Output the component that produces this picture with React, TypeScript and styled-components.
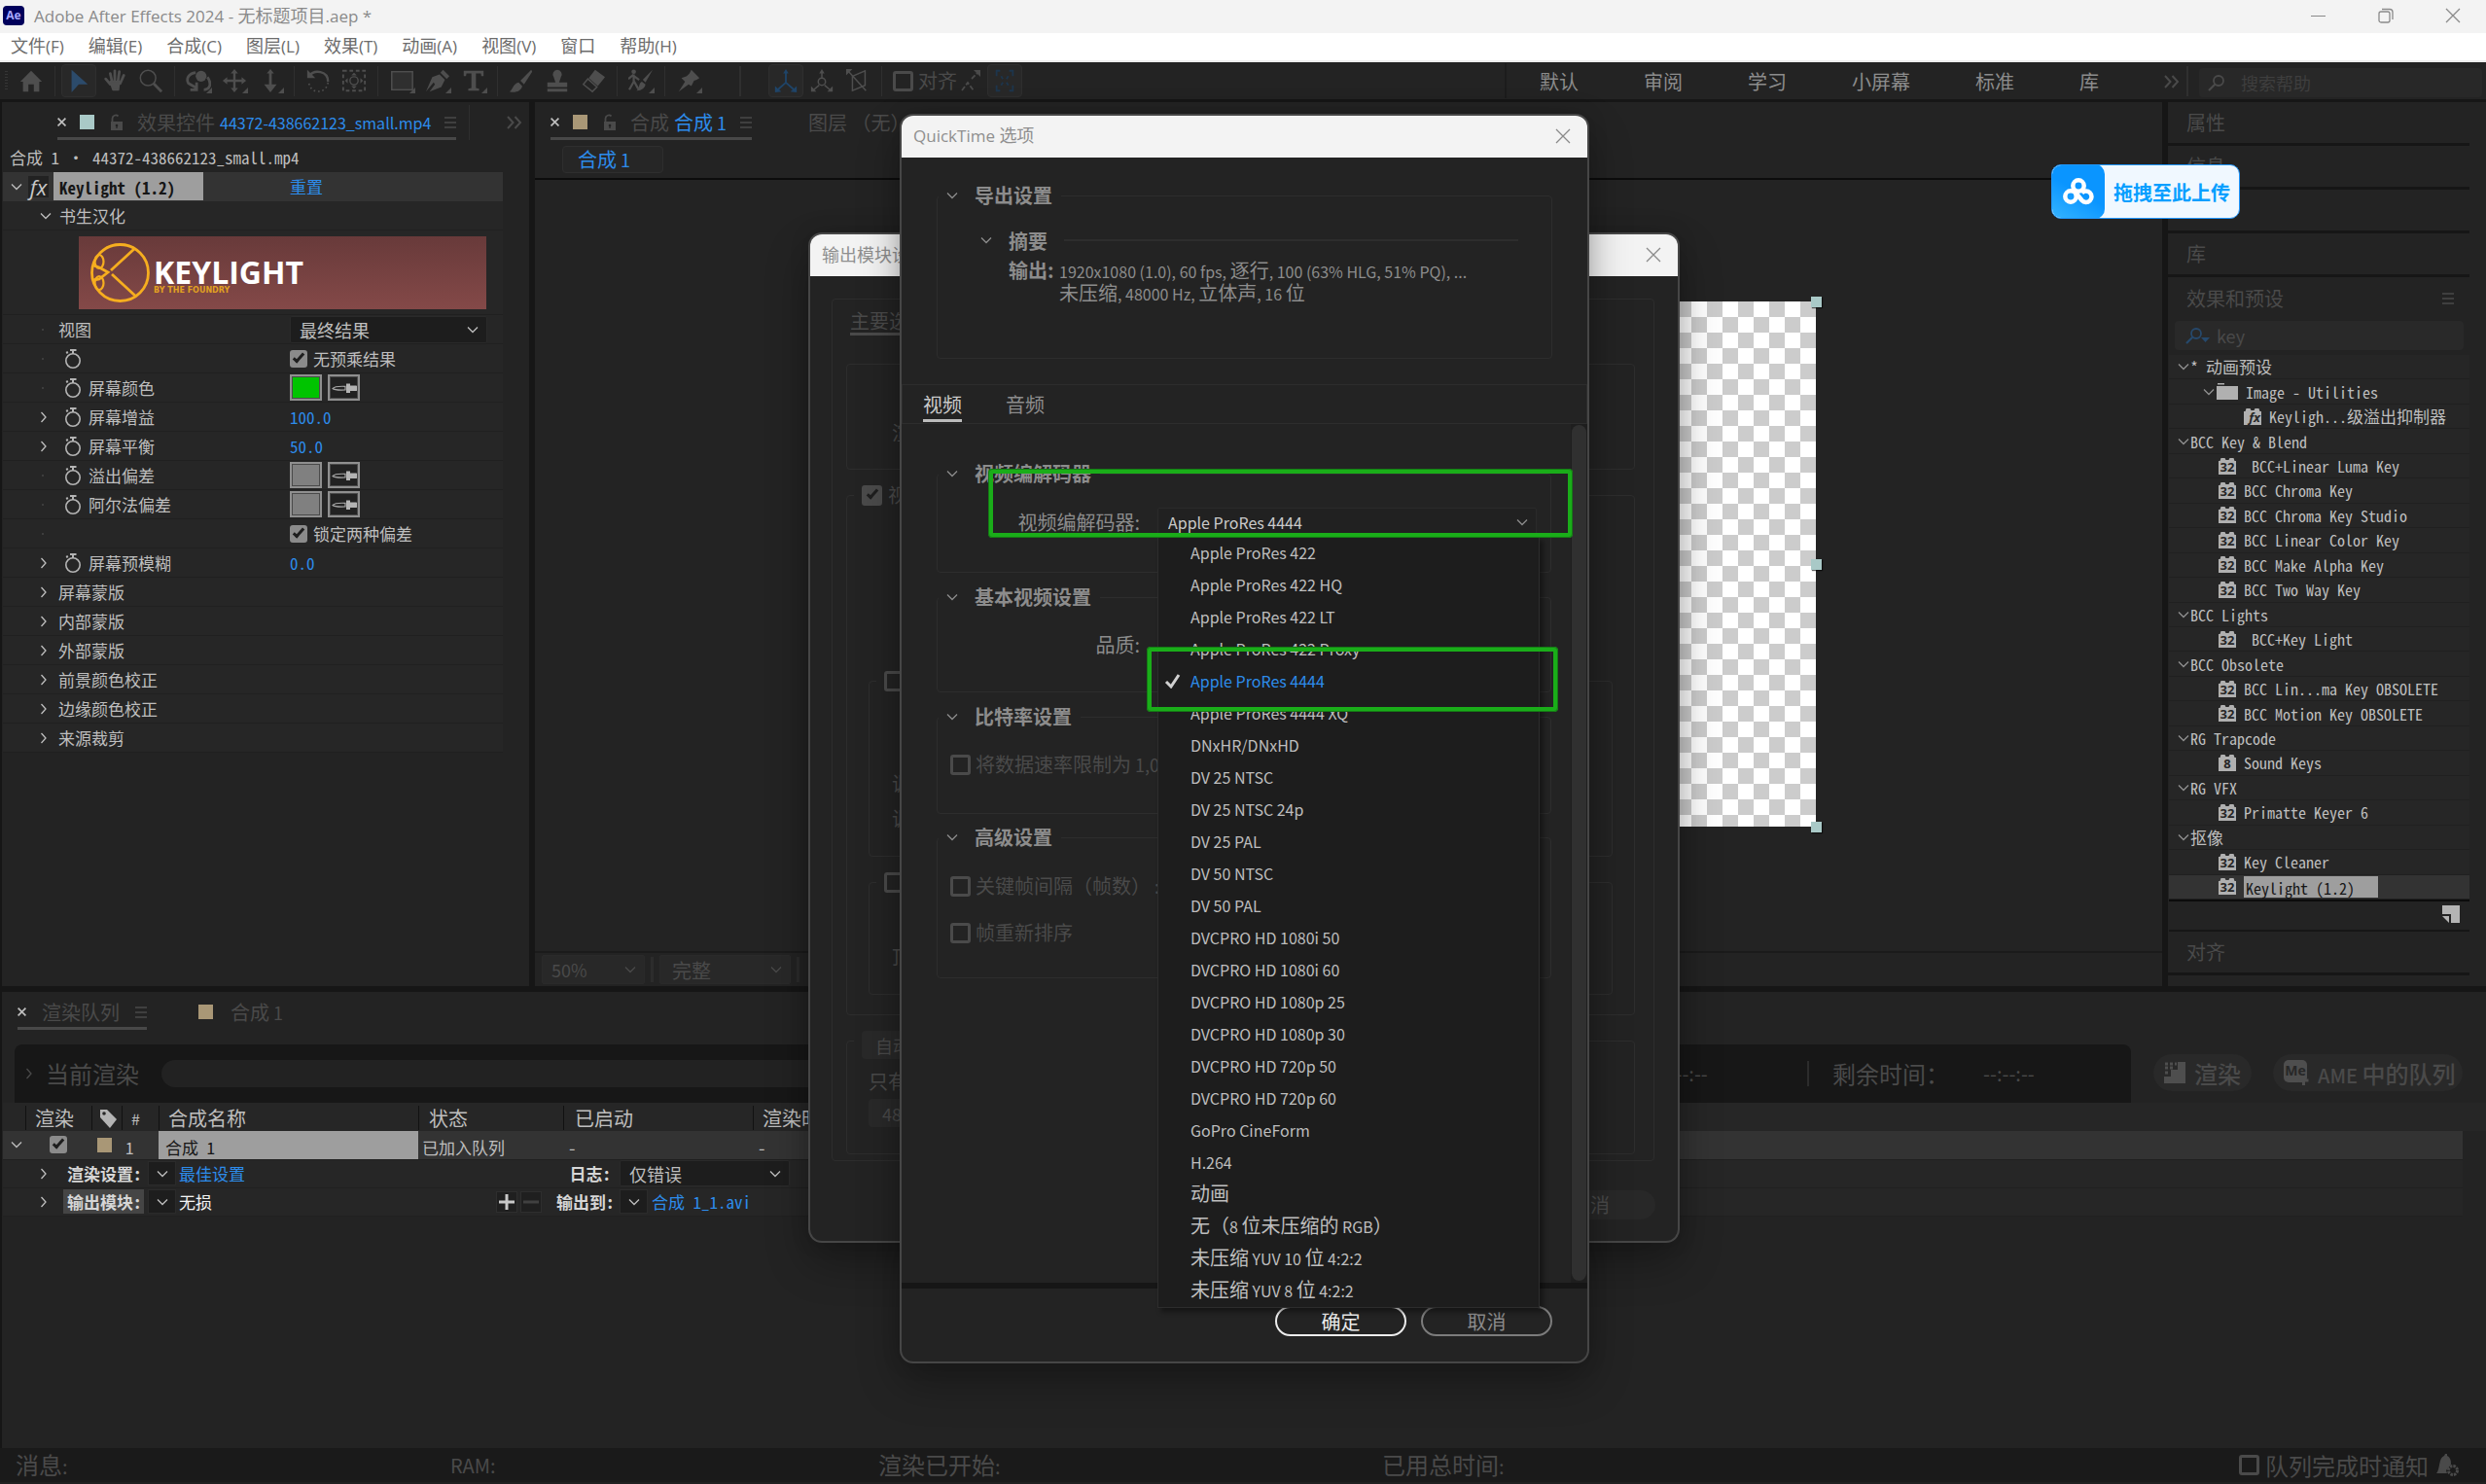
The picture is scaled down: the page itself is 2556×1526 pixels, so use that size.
import React from "react";
import styled, { createGlobalStyle, css } from "styled-components";

const uiFont = '"Noto Sans CJK SC", "Noto Sans", sans-serif';
const winFont = '"Open Sans", "Noto Sans CJK SC", sans-serif';
const listFont = '"Noto Sans Mono CJK SC", "Liberation Mono", "Noto Sans CJK SC", monospace';

const c = {
  gap: "#161616",
  panel: "#232323",
  row: "#262626",
  rowLine: "#202020",
  selected: "#333333",
  field: "#1d1d1d",
  line: "#2d2d2d",
  dim: "#4a4a4a",
  mid: "#8c8c8c",
  text: "#bebebe",
  bright: "#d6d6d6",
  blue: "#2d8ceb",
  highlight: "#9e9e9e",
  aqua: "#a9c9c7",
  sand: "#a99776",
};

const Global = createGlobalStyle`
  *, *::before, *::after { box-sizing: border-box; }
  html, body { margin: 0; background: ${c.panel}; }
  body { font-family: ${uiFont}; font-size: 16px; color: ${c.text}; }
  button, input, select { font: inherit; color: inherit; margin: 0; }
  button { background: none; border: 0; padding: 0; text-align: left; cursor: pointer; }
  ul { list-style: none; margin: 0; padding: 0; }
  h1, h2, h3, p { margin: 0; font-size: inherit; font-weight: inherit; }
  svg { display: block; flex: none; }
`;

/* Chinese runs are set a little larger than the Latin text beside them. */
const Run = styled.span<{ $size: number }>`
  font-size: ${(p) => p.$size}px;
`;
function Mixed({ children, cjk = 20 }: { children: string; cjk?: number }) {
  const parts = children.split(/([\u3000-\u9fff\uff00-\uffef]+)/).filter(Boolean);
  return (
    <span>
      {parts.map((part, i) =>
        /[\u3000-\u9fff\uff00-\uffef]/.test(part) ? (
          <Run key={i} $size={cjk}>{part}</Run>
        ) : (
          part
        )
      )}
    </span>
  );
}

/* ---------- small drawings ---------- */
const Chevron = ({ dir = "down", color = c.text }: { dir?: "down" | "right"; color?: string }) =>
  dir === "down" ? (
    <svg width="12" height="8" viewBox="0 0 12 8" fill="none" stroke={color} strokeWidth="1.3">
      <path d="M1 1.5 6 6.5 11 1.5" />
    </svg>
  ) : (
    <svg width="8" height="12" viewBox="0 0 8 12" fill="none" stroke={color} strokeWidth="1.3">
      <path d="M1.5 1 6 6 1.5 11" />
    </svg>
  );
const Cross = ({ size = 16, color = "#8a8a8a", w = 1.3 }: { size?: number; color?: string; w?: number }) => (
  <svg width={size} height={size} viewBox="0 0 16 16" stroke={color} strokeWidth={w}>
    <path d="M1 1 15 15M15 1 1 15" />
  </svg>
);
const Bars = () => (
  <svg width="12" height="12" viewBox="0 0 12 12" stroke={c.dim} strokeWidth="1.4">
    <path d="M0 1H12M0 6H12M0 11H12" />
  </svg>
);
const Guillemet = ({ color = c.dim }: { color?: string }) => (
  <svg width="16" height="14" viewBox="0 0 16 14" fill="none" stroke={color} strokeWidth="2">
    <path d="M1 1 6.500 7 1 13M8.500 1 14 7 8.500 13" />
  </svg>
);
const Lock = () => (
  <svg width="16" height="18" viewBox="0 0 16 18">
    <rect x="3" y="8" width="12" height="9" fill={c.dim} />
    <path d="M4.500 8V5a3.500 3.500 0 0 1 6-2.500" fill="none" stroke={c.dim} strokeWidth="1.8" />
    <circle cx="9" cy="12" r="1.300" fill={c.panel} />
    <path d="M9 12v3" stroke={c.panel} strokeWidth="1.2" />
  </svg>
);
const Stopwatch = () => (
  <svg width="18" height="22" viewBox="0 0 18 22" fill="none" stroke="#b4b4b4" strokeWidth="1.6">
    <circle cx="9" cy="13" r="7.200" />
    <path d="M9 2.500V6M6 2H12.500M2.500 3.500 3.500 5.500" strokeWidth="2" />
  </svg>
);
const Dropper = () => (
  <svg width="28" height="12" viewBox="0 0 28 12">
    <path d="M2 6.500C4 4 8 4 15 4.300V8C8 8.300 4 8.500 2 6.500Z" fill="none" stroke="#a8a8a8" strokeWidth="1.2" />
    <path d="M16 1.500h4v2h6a2 2 0 0 1 2 2v2a2 2 0 0 1-2 1.500h-6v2h-4Z" fill="#b4b4b4" />
  </svg>
);
const Search = ({ color = c.dim, menu = false }: { color?: string; menu?: boolean }) => (
  <svg width={menu ? 26 : 20} height="18" viewBox={menu ? "0 0 26 18" : "0 0 20 18"} fill="none" stroke={color} strokeWidth="1.8">
    <circle cx="11" cy="7" r="5" />
    <path d="M7.300 10.700 1 17" strokeWidth="2.2" />
    {menu && <path d="M16 11h9l-4.500 5Z" fill={color} stroke="none" />}
  </svg>
);
const Brick = ({ label }: { label: string }) => (
  <svg width="18" height="17" viewBox="0 0 18 17">
    <path d="M0 3h1.500L2.500 0h4l1 2h3l1-2h4l1 3H18V17H0Z" fill="#b0b0b0" />
    <text
      x={label === "fx" ? 11 : 9}
      y="14"
      textAnchor="middle"
      fontFamily="Open Sans, sans-serif"
      fontSize="13"
      fontWeight="700"
      fontStyle={label === "fx" ? "italic" : "normal"}
      fill="#262626"
    >
      {label}
    </text>
  </svg>
);
const Folder = () => (
  <svg width="22" height="17" viewBox="0 0 22 17">
    <path d="M1 0h7v1.500H1ZM0 3h22v14H0Z" fill="#b0b0b0" />
  </svg>
);

const g = "#4e4e4e";
const toolIcons: Record<string, React.ReactNode> = {
  home: <path d="M2 15 14 3 26 15H23V26H17V18H11V26H5V15Z" fill={g} />,
  select: <path d="M6 2V27L14 18H24Z" fill="#2c4b6b" />,
  hand: (
    <g fill="none" stroke={g} strokeWidth="3" strokeLinecap="round">
      <path d="M4 12 9 18M9 6 11 15M14 3V14M19 4 17.500 15M24 8 20 17" />
      <path d="M9 15h10l-1 9h-6Z" fill={g} strokeWidth="2" strokeLinejoin="round" />
    </g>
  ),
  zoom: (
    <g fill="none" stroke={g}>
      <circle cx="11" cy="11" r="8.500" strokeWidth="1.6" />
      <path d="M17 17 26 26" strokeWidth="3" />
    </g>
  ),
  orbit: (
    <g>
      <circle cx="17" cy="9" r="6" fill={g} />
      <path d="M11 5C3 6 0 12 3 17L12 22M24 10C29 17 27 24 20 24M12 16V24H5" fill="none" stroke={g} strokeWidth="3" />
    </g>
  ),
  pan: (
    <g fill={g}>
      <path d="M14 1 18 6H10ZM14 27 18 22H10ZM1 14 6 10V18ZM27 14 22 10V18Z" />
      <path d="M14 4V24M4 14H24" stroke={g} strokeWidth="2.600" />
    </g>
  ),
  dolly: (
    <g fill={g}>
      <path d="M14 1 18 6H10ZM14 27 21 18H7Z" />
      <path d="M14 4V20" stroke={g} strokeWidth="3" />
    </g>
  ),
  rotate: (
    <g fill="none" stroke={g} strokeWidth="2.600">
      <path d="M4 9C10 1 25 3 25 15" />
      <path d="M25 16C23 29 6 29 4 17" strokeDasharray="1.800 3" strokeWidth="1.8" />
      <path d="M2 2V11H11Z" fill={g} stroke="none" />
    </g>
  ),
  anchor: (
    <g>
      <rect x="2" y="3" width="24" height="22" fill="none" stroke={g} strokeWidth="2" strokeDasharray="4 3" />
      <circle cx="14" cy="14" r="4.500" fill="none" stroke={g} strokeWidth="1.5" />
      <path d="M14 5 17 8H11ZM14 23 17 20H11ZM4 14 7 11V17ZM24 14 21 11V17Z" fill={g} />
    </g>
  ),
  rect: <rect x="3" y="4" width="23" height="20" fill="#2f2f2f" stroke={g} strokeWidth="1.6" />,
  pen: (
    <g fill={g}>
      <path d="M1 26 8 10 16 7 22 13 18 21 5 26 11 18 9.500 16Z" />
      <path d="M17 5 20 2 27 9 24 12Z" />
    </g>
  ),
  type: <path d="M3 3H25V9H22.500L22 6H16.500V22L20 23V25H8V23L11.500 22V6H6L5.500 9H3Z" fill={g} />,
  brush: (
    <g fill={g}>
      <path d="M25 2 13 14 17 18 26 4Z" />
      <path d="M11 16 15 20C14 26 6 28 1 26 5 24 4 18 11 16Z" />
    </g>
  ),
  stamp: <path d="M14 2a5 5 0 0 1 4 8L16 16H25V21H3V16H12L10 10A5 5 0 0 1 14 2ZM3 23H25V26H3Z" fill={g} />,
  eraser: (
    <g>
      <path d="M16 2 27 10 19 20 9 11Z" fill={g} />
      <path d="M8 12 18 21 13 26 3 18Z" fill="none" stroke={g} strokeWidth="1.6" />
    </g>
  ),
  roto: (
    <g fill={g}>
      <circle cx="6" cy="4" r="2.500" />
      <path d="M6 7V15L1 24M6 14 11 23M0 12 5 8 12 13" fill="none" stroke={g} strokeWidth="2.400" />
      <path d="M27 2 16 13 19 16Z" />
      <path d="M15 15 19 18C18 24 12 25 9 25 13 22 11 17 15 15Z" />
    </g>
  ),
  pin: <path d="M17 2 26 11 23 13 20 14 17 20 14 18 3 26 10 15 6 11 12 9 15 6Z" fill={g} />,
  axis: (
    <g fill="none" stroke="#1f4468" strokeWidth="2">
      <path d="M14 5V16L5 24M14 16 23 24" />
      <path d="M14 1 17 6H11ZM2 27V20L9 26ZM26 27V20L19 26Z" fill="#1f4468" stroke="none" />
    </g>
  ),
  axisWorld: (
    <g fill="none" stroke={g} strokeWidth="1.6">
      <path d="M14 5V11M11 19 5 24M17 19 23 24" />
      <circle cx="14" cy="15" r="4" />
      <path d="M14 1 17 6H11ZM2 26V20L8 26ZM26 26V20L20 26Z" fill={g} stroke="none" />
    </g>
  ),
  axisView: (
    <g fill="none" stroke={g} strokeWidth="1.6">
      <path d="M3 3 23 25M8 9 22 3V19L8 25Z" />
      <path d="M1 1H8L1 8Z" fill={g} stroke="none" />
    </g>
  ),
  frame: (
    <g fill="none" stroke="#1d354c" strokeWidth="2">
      <path d="M5 9V3H9M19 3H23V9M23 19V25H19M9 25H5V19" />
      <path d="M10 9l2 3M18 9l-2 3M10 19l2-3M18 19l-2-3" />
    </g>
  ),
};

/* ---------- shell ---------- */
const Shell = styled.div`
  position: relative;
  display: flex;
  flex-direction: column;
  min-height: 100vh;
  overflow: hidden;
  background: ${c.gap};
`;
const TitleBar = styled.header`
  display: flex;
  align-items: center;
  height: 34px;
  background: #f3f3f3;
  color: #8a8a8a;
  font-family: ${winFont};
  font-size: 17px;
  line-height: 24px;
  padding: 0 0 2px 3px;
`;
const AppBadge = styled.span`
  display: grid;
  place-items: center;
  width: 22px;
  height: 20px;
  margin-right: 10px;
  border-radius: 4px;
  background: #00005b;
  color: #a9a9ff;
  font-size: 12px;
  font-weight: 700;
  line-height: 18px;
`;
const WindowButtons = styled.div`
  display: flex;
  margin-left: auto;
`;
const WindowButton = styled.button`
  display: grid;
  place-items: center;
  width: 69px;
  height: 32px;
`;
const MenuBar = styled.nav`
  display: flex;
  align-items: center;
  gap: 25px;
  height: 30px;
  padding: 0 0 2px 11px;
  background: #fff;
  border-bottom: 2px solid #ececec;
  color: #6c6c6c;
  font-family: ${winFont};
  font-size: 17px;
  line-height: 24px;
`;
const Toolbar = styled.div`
  display: flex;
  align-items: center;
  height: 41px;
  background: ${c.panel};
  border-bottom: 3px solid ${c.gap};
`;
const Grip = styled.span`
  width: 3px;
  height: 20px;
  margin: 0 6px 0 5px;
  background: repeating-linear-gradient(#363636 0 1px, transparent 1px 3px);
`;
const Tool = styled.button<{ $on?: boolean }>`
  position: relative;
  display: grid;
  place-items: center;
  width: 36px;
  height: 34px;
  margin-right: 1px;
  border-radius: 4px;
  border: 1px solid ${(p) => (p.$on ? "#2f2f2f" : "transparent")};
  background: ${(p) => (p.$on ? "#282828" : "transparent")};
`;
const ToolCorner = styled.i`
  position: absolute;
  right: 3px;
  bottom: 3px;
  border: 3px solid transparent;
  border-right-color: ${g};
  border-bottom-color: ${g};
`;
const ToolRule = styled.span<{ $w?: number }>`
  width: ${(p) => p.$w ?? 1}px;
  height: 31px;
  margin: 0 6px 0 5px;
  background: #2f2f2f;
`;
const Spring = styled.span<{ $w?: number }>`
  flex: ${(p) => (p.$w ? `0 0 ${p.$w}px` : "1 1 0")};
`;
const CheckTool = styled.label`
  display: flex;
  align-items: center;
  gap: 5px;
  margin: 0 3px 0 5px;
  color: ${c.dim};
  font-size: 20px;
  line-height: 30px;
`;
const Workspaces = styled.div`
  display: flex;
  align-items: center;
  gap: 67px;
  height: 36px;
  padding: 2px 2px 0 34px;
  border-left: 2px solid #1c1c1c;
  color: ${c.mid};
  font-size: 20px;
  line-height: 30px;
`;
const HelpSearch = styled.label`
  display: flex;
  align-items: center;
  gap: 14px;
  width: 291px;
  height: 30px;
  margin: 4px 4px 0 5px;
  padding-left: 9px;
  border-radius: 4px;
  background: #282828;
`;
const PlainInput = styled.input`
  flex: 1;
  min-width: 0;
  border: 0;
  outline: 0;
  padding: 0;
  background: transparent;
  color: ${c.dim};
  font-size: 18px;
  line-height: 26px;
  &::placeholder { color: #3e3e3e; opacity: 1; }
`;

const Upper = styled.main`
  display: grid;
  grid-template-columns: 542px minmax(0, 1fr) 327px;
  gap: 6px;
  padding-left: 2px;
`;
const Panel = styled.section`
  display: flex;
  flex-direction: column;
  min-width: 0;
  background: ${c.panel};
`;
const TabStrip = styled.div<{ $pad: number }>`
  display: flex;
  align-items: flex-start;
  height: 39px;
  padding-left: ${(p) => p.$pad}px;
  color: ${c.dim};
`;
const Tab = styled.div<{ $active?: boolean; $gap?: number }>`
  display: flex;
  align-items: center;
  gap: ${(p) => p.$gap ?? 14}px;
  height: 39px;
  padding-top: 5px;
  border-bottom: 3px solid ${(p) => (p.$active ? "#484848" : "transparent")};
  font-size: 18px;
  line-height: 28px;
  white-space: nowrap;
`;
const TabName = styled.span`
  display: flex;
  gap: 5px;
`;
const Blue = styled.span`
  color: ${c.blue};
`;
const FileName = styled(Blue)`
  font-size: 16px;
`;
const Swatch = styled.i<{ $color: string }>`
  width: 15px;
  height: 15px;
  background: ${(p) => p.$color};
`;
const StripEnd = styled.span`
  display: flex;
  align-items: center;
  height: 36px;
  margin: 3px 0 0 13px;
  padding-left: 38px;
  border-left: 1px solid #2e2e2e;
`;

const listText = css`
  font-family: ${listFont};
  line-height: 24px;
  white-space: pre;
`;
const SourcePath = styled.p`
  ${listText}
  height: 33px;
  padding: 6px 0 0 8px;
  font-size: 17px;
`;
const Props = styled.div`
  ${listText}
  width: 514px;
  margin-left: 1px;
  font-size: 17px;
`;
const PropRow = styled.div<{ $head?: boolean; $pad: number }>`
  display: grid;
  grid-template-columns: 295px 1fr;
  align-items: center;
  height: 30px;
  background: ${(p) => (p.$head ? c.selected : c.row)};
  border-bottom: 1px solid ${(p) => (p.$head ? c.selected : c.rowLine)};
  > :first-child { padding-left: ${(p) => p.$pad}px; }
`;
const PropName = styled.span`
  display: flex;
  align-items: center;
`;
const Arrow = styled.span<{ $w: number }>`
  display: flex;
  width: ${(p) => p.$w}px;
`;
const Dot = styled.i`
  width: 2px;
  height: 2px;
  margin: 0 2px;
  background: #3d3d3d;
`;
const WatchSlot = styled.span`
  width: 25px;
  margin-left: 6px;
`;
const FxMark = styled.span`
  display: grid;
  place-items: center;
  width: 21px;
  height: 22px;
  margin: 0 5px 0 0;
  background: #222;
  color: #c8c8c8;
  font: italic 22px/22px "Open Sans", sans-serif;
`;
const NameChip = styled.span<{ $w: number; $h: number; $pad: number; $bold?: boolean }>`
  width: ${(p) => p.$w}px;
  height: ${(p) => p.$h}px;
  padding-left: ${(p) => p.$pad}px;
  background: ${c.highlight};
  color: #161616;
  font-weight: ${(p) => (p.$bold ? 700 : 400)};
  line-height: ${(p) => p.$h + 2}px;
`;
const BannerRow = styled.div`
  height: 87px;
  padding: 6px 17px 6px 78px;
  background: ${c.row};
  border-bottom: 1px solid ${c.rowLine};
`;
const Banner = styled.div`
  display: flex;
  align-items: center;
  gap: 4px;
  height: 75px;
  padding-left: 12px;
  background: linear-gradient(#683a3a, #844948);
`;
const BannerName = styled.div`
  padding-top: 7px;
  color: #fff;
  font: 700 32px/30px "Open Sans", sans-serif;
  small {
    display: block;
    color: #e0a022;
    font: 700 8px/8px "DejaVu Sans", sans-serif;
  }
`;
const PropValue = styled.span`
  display: flex;
  align-items: center;
  gap: 6px;
`;
const ColorButton = styled.button<{ $color: string }>`
  display: grid;
  place-items: center;
  width: 33px;
  height: 27px;
  border: 2px solid #8f8f8f;
  outline: 1px solid #4a4a4a;
  outline-offset: -3px;
  background: ${(p) => p.$color};
`;
const Tick = styled.input.attrs({ type: "checkbox" })<{ $size?: number; $dim?: boolean }>`
  appearance: none;
  flex: none;
  display: grid;
  place-items: center;
  width: ${(p) => p.$size ?? 18}px;
  height: ${(p) => p.$size ?? 18}px;
  border: 3px solid ${(p) => (p.$dim ? c.dim : "#8b8b8b")};
  border-radius: 3px;
  &:checked { background: ${(p) => (p.$dim ? c.dim : "#8b8b8b")}; }
  &:checked::before {
    content: "";
    width: 6px;
    height: 12px;
    margin-top: -4px;
    border: solid #1e1e1e;
    border-width: 0 3px 3px 0;
    transform: rotate(42deg);
  }
`;
const TickLabel = styled.label`
  display: flex;
  align-items: center;
  gap: 6px;
`;
const SelectBox = styled.span<{ $w: number; $h: number; $bg?: string; $pad?: number }>`
  position: relative;
  display: flex;
  align-items: center;
  width: ${(p) => p.$w}px;
  height: ${(p) => p.$h}px;
  border-radius: 2px;
  border: 1px solid #2a2a2a;
  background: ${(p) => p.$bg ?? c.field};
  select {
    appearance: none;
    width: 100%;
    height: 100%;
    border: 0;
    outline: 0;
    padding: 0 0 0 ${(p) => p.$pad ?? 9}px;
    background: transparent;
  }
  svg { position: absolute; right: 8px; pointer-events: none; }
`;
const SelectText = styled.select<{ $size: number; $color?: string }>`
  font-family: ${uiFont};
  font-size: ${(p) => p.$size}px;
  color: ${(p) => p.$color ?? c.text};
`;

/* ---------- composition ---------- */
const Crumb = styled.div`
  height: 41px;
  padding: 6px 0 0 28px;
  border-bottom: 2px solid #0c0c0c;
`;
const CrumbButton = styled.button`
  width: 104px;
  height: 28px;
  padding-left: 15px;
  border: 1px solid #2e2e2e;
  border-radius: 4px;
  background: #262626;
  color: ${c.blue};
  font-size: 18px;
  line-height: 24px;
`;
const Stage = styled.div`
  display: flex;
  justify-content: center;
  padding: 125px 0 128px;
`;
const Canvas = styled.div`
  position: relative;
  width: 960px;
  height: 540px;
  background: conic-gradient(#ccc 25%, #fff 0 50%, #ccc 0 75%, #fff 0) 0 0 / 32px 32px;
`;
const Handle = styled.i<{ $at: string }>`
  position: absolute;
  right: -6px;
  top: ${(p) => p.$at};
  width: 11px;
  height: 11px;
  margin-top: -5px;
  background: ${c.aqua};
  box-shadow: 1px 1px 1px rgba(0, 0, 0, 0.6);
`;
const ViewBar = styled.div`
  display: flex;
  align-items: center;
  gap: 6px;
  height: 36px;
  padding-left: 7px;
  border-top: 2px solid #1b1b1b;
`;
const ViewRule = styled.i`
  width: 3px;
  height: 26px;
  background: #2c2c2c;
`;

/* ---------- right column ---------- */
const PanelTitle = styled.h2`
  display: flex;
  align-items: center;
  height: 45px;
  margin-right: 17px;
  padding-left: 19px;
  border-bottom: 3px solid ${c.gap};
  color: ${c.dim};
  font-size: 20px;
  line-height: 28px;
`;
const EffectsTitle = styled.h2`
  display: flex;
  align-items: center;
  justify-content: space-between;
  height: 45px;
  padding: 0 33px 2px 19px;
  color: ${c.dim};
  font-size: 20px;
  line-height: 28px;
`;
const EffectSearch = styled.label`
  display: flex;
  align-items: center;
  gap: 6px;
  height: 30px;
  margin: 0 23px 5px 7px;
  padding-left: 11px;
  border-radius: 4px;
  background: #292929;
`;
const EffectList = styled.ul`
  ${listText}
  display: flex;
  flex-direction: column;
  height: 562px;
  margin: 0 17px 0 1px;
  border-bottom: 2px solid #0c0c0c;
  font-size: 16px;
`;
const EffectRow = styled.li<{ $pad: number; $on?: boolean }>`
  display: flex;
  flex: 1 1 0;
  min-height: 0;
  align-items: center;
  padding-left: ${(p) => p.$pad}px;
  background: ${(p) => (p.$on ? c.selected : c.row)};
  border-bottom: 1px solid ${c.rowLine};
`;
const EffectIcon = styled.span`
  margin-right: 8px;
`;
const EffectFoot = styled.div`
  display: flex;
  justify-content: flex-end;
  height: 31px;
  margin: 0 17px 0 1px;
  padding: 4px 10px 0 0;
  border-bottom: 2px solid ${c.gap};
`;

/* ---------- render queue ---------- */
const Queue = styled.section`
  flex: 1;
  margin: 6px 0 0 2px;
  background: ${c.panel};
`;
const Current = styled.div`
  display: flex;
  align-items: flex-start;
  margin-top: 15px;
  padding-left: 13px;
`;
const CurrentBox = styled.div`
  flex: 1;
  display: flex;
  align-items: center;
  height: 60px;
  padding-left: 11px;
  border-radius: 8px 8px 0 0;
  background: #171717;
  color: ${c.dim};
  font-size: 24px;
  line-height: 32px;
`;
const CurrentName = styled.span`
  margin: 0 23px 0 13px;
`;
const Progress = styled.div`
  flex: 1;
  height: 28px;
  margin-right: 190px;
  border-radius: 14px;
  background: #222;
`;
const Clock = styled.span<{ $w: number }>`
  width: ${(p) => p.$w}px;
  font-size: 20px;
`;
const TimeLeft = styled.span`
  width: 181px;
  padding-left: 24px;
  border-left: 2px solid #2c2c2c;
  line-height: 26px;
`;
const RenderButton = styled.button<{ $w: number; $ml: number }>`
  display: flex;
  align-items: center;
  gap: 9px;
  width: ${(p) => p.$w}px;
  height: 38px;
  margin: 10px 0 0 ${(p) => p.$ml}px;
  padding-left: 11px;
  border-radius: 19px;
  background: #292929;
  color: ${c.dim};
  font-size: 20px;
  font-weight: 500;
  white-space: nowrap;
`;
const QueueTable = styled.table`
  width: calc(100% - 25px);
  margin-left: 1px;
  border-collapse: collapse;
  table-layout: fixed;
  font-family: ${listFont};
  font-size: 17px;
  th, td { padding: 0; text-align: left; font-weight: 400; white-space: nowrap; }
  th {
    height: 29px;
    background: ${c.row};
    font-family: ${uiFont};
    font-size: 20px;
    line-height: 28px;
  }
  th:last-child { box-shadow: 24px 0 0 ${c.row}; }
`;
const Head = styled.span<{ $pad: number }>`
  display: flex;
  align-items: center;
  height: 25px;
  margin-top: 2px;
  padding-left: ${(p) => p.$pad}px;
  border-left: 1px solid #111;
`;
const ItemRow = styled.tr`
  height: 29px;
  background: ${c.selected};
  border-bottom: 1px solid #1f1f1f;
`;
const ItemCell = styled.td<{ $pad: number; $name?: boolean }>`
  && {
    padding: 3px 0 0 ${(p) => p.$pad}px;
    line-height: 24px;
    vertical-align: bottom;
    ${(p) => p.$name && `background: ${c.highlight}; color: #161616;`}
  }
`;
const CellBox = styled.span<{ $pad: number }>`
  display: flex;
  align-items: center;
  height: 28px;
  padding-left: ${(p) => p.$pad}px;
`;
const DetailRow = styled.tr`
  height: 29px;
  background: ${c.row};
  border-bottom: 1px solid ${c.rowLine};
`;
const Detail = styled.div`
  display: grid;
  grid-template-columns: 38px 24px 87px 32px 312px 76px 65px auto;
  align-items: center;
  height: 28px;
`;
const DetailLabel = styled.span<{ $on?: boolean }>`
  justify-self: start;
  height: 25px;
  padding: 0 2px 0 4px;
  background: ${(p) => (p.$on ? "#454545" : "transparent")};
  color: ${c.bright};
  font-weight: 700;
  line-height: 26px;
`;
const DetailRight = styled.span`
  padding-right: 9px;
  color: ${c.bright};
  font-weight: 700;
  text-align: right;
`;
const MiniMenu = styled.button`
  display: grid;
  place-items: center;
  width: 29px;
  height: 25px;
  border: 1px solid #2b2b2b;
  background: ${c.field};
`;
const Pair = styled.span`
  display: flex;
  align-items: center;
  gap: 4px;
`;
const SquareButton = styled.button`
  display: grid;
  place-items: center;
  width: 22px;
  height: 22px;
  border: 1px solid #2e2e2e;
  background: #1f1f1f;
`;
const White = styled.span`
  color: #f4f4f4;
`;
const Plus = styled.span`
  display: flex;
  gap: 3px;
  width: 47px;
  margin-left: 14px;
`;
const StatusBar = styled.footer`
  display: grid;
  grid-template-columns: 447px 440px 518px 1fr auto auto;
  align-items: center;
  height: 37px;
  padding: 0 27px 0 16px;
  background: #1a1a1a;
  border-bottom: 2px solid #202020;
  color: ${c.dim};
  font-size: 20px;
  line-height: 30px;
`;
const NotifyCheck = styled.label`
  display: flex;
  align-items: center;
  gap: 6px;
  margin-right: 8px;
`;

/* ---------- windows ---------- */
const Dialog = styled.section<{ $w: number; $top: number; $dx: number }>`
  position: absolute;
  top: ${(p) => p.$top}px;
  left: calc(50% - ${(p) => p.$dx}px);
  width: ${(p) => p.$w}px;
  border: 2px solid #464646;
  border-radius: 14px;
  background: ${c.panel};
  box-shadow: 0 20px 44px rgba(0, 0, 0, 0.3), 0 0 20px rgba(0, 0, 0, 0.14);
`;
const DialogHead = styled.header`
  display: flex;
  align-items: center;
  justify-content: space-between;
  height: 43px;
  padding: 0 17px 2px 12px;
  border-radius: 12px 12px 0 0;
  background: #f3f3f3;
  color: #8f8f8f;
  font-family: ${winFont};
  font-size: 17px;
  line-height: 24px;
`;
const Frame = styled.div`
  margin: 23px 24px 0 22px;
  padding: 10px 19px 6px 14px;
  border: 1px solid ${c.line};
  border-radius: 4px;
`;
const FrameTab = styled.button`
  display: block;
  height: 27px;
  margin: 0 0 29px 4px;
  border-bottom: 3px solid ${c.dim};
  color: ${c.dim};
  font-size: 20px;
  line-height: 22px;
`;
const Group = styled.fieldset<{ $h: number; $mt?: number }>`
  min-width: 0;
  min-height: ${(p) => p.$h}px;
  margin: ${(p) => p.$mt ?? 0}px 0 0;
  padding: 0;
  border: 1px solid ${c.line};
  border-radius: 4px;
`;
const Legend = styled.legend<{ $ml?: number; $h?: number }>`
  display: flex;
  align-items: ${(p) => (p.$h ? "flex-end" : "center")};
  gap: 17px;
  height: ${(p) => p.$h ?? 28}px;
  margin-left: ${(p) => p.$ml ?? 1}px;
  padding: 0 9px 0 8px;
  color: ${c.mid};
  font-size: 20px;
  font-weight: 700;
  line-height: 28px;
`;
const GroupBody = styled.div<{ $pt: number; $pl: number; $pr?: number }>`
  padding: ${(p) => p.$pt}px ${(p) => p.$pr ?? 13}px 0 ${(p) => p.$pl}px;
`;
const DimLine = styled.p`
  height: 36px;
  overflow: hidden;
  color: ${c.dim};
  font-size: 20px;
  line-height: 36px;
`;
const DimButton = styled.button`
  height: 29px;
  padding: 0 14px;
  border-radius: 4px;
  background: #292929;
  color: ${c.dim};
  font-size: 18px;
  font-weight: 400;
  line-height: 28px;
`;
const DimCheck = styled.label`
  display: flex;
  align-items: center;
  gap: 6px;
  color: ${c.dim};
  font-weight: 400;
`;
const FrameFoot = styled.div`
  display: flex;
  justify-content: flex-end;
  gap: 15px;
  padding: 30px 23px 22px;
`;
const DimPill = styled.button`
  width: 134px;
  height: 30px;
  border-radius: 15px;
  background: #282828;
  color: ${c.dim};
  font-size: 20px;
  line-height: 28px;
  text-align: center;
`;
const Summary = styled.div`
  padding: 25px 36px 26px;
`;
const SubHead = styled.h3`
  display: flex;
  align-items: center;
  gap: 17px;
  height: 28px;
  color: ${c.mid};
  font-size: 20px;
  font-weight: 700;
  &::after {
    content: "";
    flex: 1;
    height: 2px;
    background: ${c.line};
  }
`;
const OutputLine = styled.div`
  display: grid;
  grid-template-columns: 52px 1fr;
  margin: 6px 0 0 29px;
  color: ${c.mid};
  font-size: 16px;
  line-height: 21px;
  white-space: nowrap;
  b { font-size: 20px; }
`;
const DialogTabs = styled.div`
  display: flex;
  gap: 45px;
  height: 41px;
  padding: 5px 0 0 21px;
  border: 1px solid ${c.line};
`;
const DialogTab = styled.button<{ $on?: boolean }>`
  height: 33px;
  border-bottom: 3px solid ${(p) => (p.$on ? "#bcbcbc" : "transparent")};
  color: ${(p) => (p.$on ? "#cacaca" : c.mid)};
  font-size: 20px;
  line-height: 30px;
`;
const ScrollArea = styled.div`
  display: flex;
`;
const ScrollContent = styled.div`
  flex: 1;
  min-width: 0;
  padding: 37px 20px 313px 36px;
`;
const ScrollTrack = styled.div`
  width: 17px;
  padding: 1px 1px 2px;
  background: #1e1e1e;
  &::before {
    content: "";
    display: block;
    height: 100%;
    border-radius: 8px;
    background: #303030;
  }
`;
const Field = styled.div`
  display: grid;
  grid-template-columns: 208px 390px;
  gap: 18px;
  align-items: center;
  height: 30px;
  color: ${c.mid};
  font-size: 20px;
  line-height: 28px;
  label { text-align: right; }
`;
const CheckRow = styled.label`
  display: flex;
  align-items: center;
  gap: 5px;
  height: 30px;
  margin-bottom: 18px;
  color: ${c.dim};
  font-size: 18px;
  line-height: 28px;
  white-space: nowrap;
`;
const CodecWrap = styled.div`
  position: relative;
`;
const CodecMenu = styled.ul`
  position: absolute;
  z-index: 2;
  top: 30px;
  left: 0;
  width: 393px;
  border: 1px solid ${c.line};
  border-top: 0;
  background: #1d1d1d;
  box-shadow: 4px 4px 5px rgba(0, 0, 0, 0.4);
  color: ${c.text};
  font-size: 16px;
`;
const CodecItem = styled.li<{ $on?: boolean }>`
  display: grid;
  grid-template-columns: 27px 1fr;
  align-items: center;
  height: 33px;
  padding: 0 0 2px 6px;
  color: ${(p) => (p.$on ? c.blue : "inherit")};
  line-height: 30px;
`;
const DialogFoot = styled.div`
  display: flex;
  justify-content: flex-end;
  gap: 15px;
  padding: 18px 36px 26px;
  border-top: 6px solid ${c.gap};
`;
const Pill = styled.button<{ $main?: boolean }>`
  width: 135px;
  height: 31px;
  border: 2px solid ${(p) => (p.$main ? "#ececec" : "#7c7c7c")};
  border-radius: 16px;
  color: ${(p) => (p.$main ? "#ececec" : c.mid)};
  font-size: 20px;
  line-height: 25px;
  text-align: center;
`;
const Marker = styled.div<{ $x: number; $y: number; $w: number; $h: number }>`
  position: absolute;
  z-index: 3;
  left: ${(p) => p.$x}px;
  top: ${(p) => p.$y}px;
  width: ${(p) => p.$w}px;
  height: ${(p) => p.$h}px;
  border: 5px solid #1aad19;
  border-radius: 4px;
  outline: 1px solid rgba(20, 110, 20, 0.8);
  outline-offset: -1px;
  pointer-events: none;
`;
const Uploader = styled.button`
  position: absolute;
  top: 169px;
  right: 253px;
  display: flex;
  align-items: center;
  width: 194px;
  height: 56px;
  overflow: hidden;
  border: 1px solid #1f97ff;
  border-radius: 10px;
  background: #f0f8ff;
  color: #079fff;
  font-size: 20px;
  font-weight: 700;
  white-space: nowrap;
`;
const UploaderMark = styled.span`
  display: grid;
  place-items: center;
  width: 54px;
  height: 56px;
  margin-right: 9px;
  border-radius: 10px;
  background: linear-gradient(30deg, #35b4ff, #0a95ff 50%);
`;

/* ---------- data ---------- */
const menus = ["文件(F)", "编辑(E)", "合成(C)", "图层(L)", "效果(T)", "动画(A)", "视图(V)", "窗口", "帮助(H)"];
const toolGroups: [string, boolean?][][] = [
  [["orbit", true], ["pan", true], ["dolly", true]],
  [["rotate"], ["anchor"]],
  [["rect", true], ["pen", true], ["type", true]],
  [["brush"], ["stamp"], ["eraser"]],
  [["roto", true]],
];
type Prop = { name: string; arrow?: boolean; watch?: boolean; value?: string; color?: string; check?: string; pick?: boolean };
const props: Prop[] = [
  { name: "视图", pick: true },
  { name: "", watch: true, check: "无预乘结果" },
  { name: "屏幕颜色", watch: true, color: "#00c400" },
  { name: "屏幕增益", watch: true, arrow: true, value: "100.0" },
  { name: "屏幕平衡", watch: true, arrow: true, value: "50.0" },
  { name: "溢出偏差", watch: true, color: "#808080" },
  { name: "阿尔法偏差", watch: true, color: "#808080" },
  { name: "", check: "锁定两种偏差" },
  { name: "屏幕预模糊", watch: true, arrow: true, value: "0.0" },
  { name: "屏幕蒙版", arrow: true },
  { name: "内部蒙版", arrow: true },
  { name: "外部蒙版", arrow: true },
  { name: "前景颜色校正", arrow: true },
  { name: "边缘颜色校正", arrow: true },
  { name: "来源裁剪", arrow: true },
];
type Effect = { t: string; kind: "group" | "folder" | "preset" | "fx"; bits?: string; on?: boolean };
const effectPad = { group: 9, folder: 35, preset: 77, fx: 51 };
const effects: Effect[] = [
  { t: "* 动画预设", kind: "group" },
  { t: "Image - Utilities", kind: "folder" },
  { t: "Keyligh...级溢出抑制器", kind: "preset", bits: "fx" },
  { t: "BCC Key & Blend", kind: "group" },
  { t: " BCC+Linear Luma Key", kind: "fx" },
  { t: "BCC Chroma Key", kind: "fx" },
  { t: "BCC Chroma Key Studio", kind: "fx" },
  { t: "BCC Linear Color Key", kind: "fx" },
  { t: "BCC Make Alpha Key", kind: "fx" },
  { t: "BCC Two Way Key", kind: "fx" },
  { t: "BCC Lights", kind: "group" },
  { t: " BCC+Key Light", kind: "fx" },
  { t: "BCC Obsolete", kind: "group" },
  { t: "BCC Lin...ma Key OBSOLETE", kind: "fx" },
  { t: "BCC Motion Key OBSOLETE", kind: "fx" },
  { t: "RG Trapcode", kind: "group" },
  { t: "Sound Keys", kind: "fx", bits: "8" },
  { t: "RG VFX", kind: "group" },
  { t: "Primatte Keyer 6", kind: "fx" },
  { t: "抠像", kind: "group" },
  { t: "Key Cleaner", kind: "fx" },
  { t: "Keylight (1.2)", kind: "fx", on: true },
];
const codecs = [
  "Apple ProRes 422", "Apple ProRes 422 HQ", "Apple ProRes 422 LT", "Apple ProRes 422 Proxy",
  "Apple ProRes 4444", "Apple ProRes 4444 XQ", "DNxHR/DNxHD", "DV 25 NTSC", "DV 25 NTSC 24p",
  "DV 25 PAL", "DV 50 NTSC", "DV 50 PAL", "DVCPRO HD 1080i 50", "DVCPRO HD 1080i 60",
  "DVCPRO HD 1080p 25", "DVCPRO HD 1080p 30", "DVCPRO HD 720p 50", "DVCPRO HD 720p 60",
  "GoPro CineForm", "H.264", "动画", "无（8 位未压缩的 RGB）", "未压缩 YUV 10 位 4:2:2", "未压缩 YUV 8 位 4:2:2",
];

function ToolButton({ name, corner, on }: { name: string; corner?: boolean; on?: boolean }) {
  return (
    <Tool $on={on} aria-label={name}>
      <svg width="26" height="26" viewBox="0 0 28 28">{toolIcons[name]}</svg>
      {corner && <ToolCorner />}
    </Tool>
  );
}

function TopBars() {
  return (
    <>
      <TitleBar>
        <AppBadge>Ae</AppBadge>
        <Mixed cjk={18}>Adobe After Effects 2024 - 无标题项目.aep *</Mixed>
        <WindowButtons>
          <WindowButton aria-label="最小化">
            <svg width="16" height="16" stroke="#8a8a8a"><path d="M0 8.500H15" /></svg>
          </WindowButton>
          <WindowButton aria-label="还原">
            <svg width="16" height="16" fill="none" stroke="#8a8a8a" strokeWidth="1.3">
              <rect x="1" y="4" width="11" height="11" rx="2" />
              <path d="M4 1.500H12a3 3 0 0 1 3 3V12" />
            </svg>
          </WindowButton>
          <WindowButton aria-label="关闭"><Cross /></WindowButton>
        </WindowButtons>
      </TitleBar>
      <MenuBar>
        {menus.map((m) => (
          <button key={m}><Mixed cjk={18}>{m}</Mixed></button>
        ))}
      </MenuBar>
      <Toolbar>
        <Grip />
        <ToolButton name="home" />
        <ToolRule />
        <ToolButton name="select" on />
        <ToolButton name="hand" />
        <ToolButton name="zoom" />
        <ToolRule />
        {toolGroups.map((group, i) => (
          <React.Fragment key={i}>
            {group.map(([name, corner]) => (
              <ToolButton key={name} name={name} corner={corner} />
            ))}
            <ToolRule />
          </React.Fragment>
        ))}
        <ToolButton name="pin" corner />
        <Spring $w={28} />
        <ToolRule $w={2} />
        <Spring $w={22} />
        <ToolButton name="axis" on />
        <ToolButton name="axisWorld" />
        <ToolButton name="axisView" />
        <ToolRule />
        <CheckTool>
          <Tick $size={21} $dim />对齐
        </CheckTool>
        <svg width="22" height="24" viewBox="0 0 22 24" fill="none" stroke={c.dim} strokeWidth="1.8">
          <path d="M2 22 8 14 14 22M12 10 18 4" strokeDasharray="5 2" />
          <path d="M14 1H21V8Z" fill={c.dim} stroke="none" />
        </svg>
        <Spring $w={6} />
        <ToolButton name="frame" on />
        <Spring />
        <Workspaces>
          {["默认", "审阅", "学习", "小屏幕", "标准", "库"].map((w) => (
            <button key={w}>{w}</button>
          ))}
          <Guillemet />
        </Workspaces>
        <ToolRule $w={2} />
        <HelpSearch>
          <Search />
          <PlainInput placeholder="搜索帮助" aria-label="搜索帮助" />
        </HelpSearch>
      </Toolbar>
    </>
  );
}

function EffectControls() {
  return (
    <Panel>
      <TabStrip $pad={57}>
        <Tab $active>
          <Cross size={9} color={c.text} w={3} />
          <Swatch $color={c.aqua} />
          <Lock />
          <TabName>
            <Run $size={20}>效果控件</Run>
            <FileName>44372-438662123_small.mp4</FileName>
          </TabName>
          <Bars />
        </Tab>
        <StripEnd><Guillemet /></StripEnd>
      </TabStrip>
      <SourcePath>合成 1 • 44372-438662123_small.mp4</SourcePath>
      <Props>
        <PropRow $head $pad={8}>
          <PropName>
            <Arrow $w={18}><Chevron /></Arrow>
            <FxMark>fx</FxMark>
            <NameChip $w={154} $h={29} $pad={6} $bold>Keylight (1.2)</NameChip>
          </PropName>
          <Blue as="button">重置</Blue>
        </PropRow>
        <PropRow $pad={38}>
          <PropName><Arrow $w={20}><Chevron /></Arrow>书生汉化</PropName>
        </PropRow>
        <BannerRow>
          <Banner>
            <svg width="61" height="63" viewBox="0 0 61 63" fill="none" stroke="#f6ae1f" strokeWidth="2.800">
              <circle cx="30.500" cy="31.500" r="29" />
              <path d="M45 7 21 29M47 56 22 33M3 24 9 26 18 31 9 38 3 39" />
              <ellipse cx="9" cy="20" rx="4.500" ry="7" strokeWidth="2.200" />
              <ellipse cx="9" cy="42" rx="4.500" ry="7" strokeWidth="2.200" />
            </svg>
            <BannerName>
              KEYLIGHT
              <small>BY THE FOUNDRY</small>
            </BannerName>
          </Banner>
        </BannerRow>
        {props.map((p, i) => (
          <PropRow key={i} $pad={38}>
            <PropName>
              <Arrow $w={19}>{p.arrow ? <Chevron dir="right" /> : <Dot />}</Arrow>
              {p.watch && <WatchSlot><Stopwatch /></WatchSlot>}
              {p.name}
            </PropName>
            <PropValue>
              {p.pick && (
                <SelectBox $w={203} $h={28}>
                  <SelectText $size={18} aria-label="视图" defaultValue="最终结果">
                    <option>最终结果</option>
                  </SelectText>
                  <Chevron />
                </SelectBox>
              )}
              {p.check && (
                <TickLabel><Tick defaultChecked />{p.check}</TickLabel>
              )}
              {p.color && (
                <>
                  <ColorButton $color={p.color} aria-label={p.name} />
                  <ColorButton $color="#222" aria-label="吸管"><Dropper /></ColorButton>
                </>
              )}
              {p.value && <Blue as="button">{p.value}</Blue>}
            </PropValue>
          </PropRow>
        ))}
      </Props>
    </Panel>
  );
}

function Composition() {
  return (
    <Panel>
      <TabStrip $pad={16}>
        <Tab $active>
          <Cross size={9} color={c.text} w={3} />
          <Swatch $color={c.sand} />
          <Lock />
          <TabName>
            <Run $size={20}>合成</Run>
            <Blue><Mixed>合成 1</Mixed></Blue>
          </TabName>
          <Bars />
        </Tab>
        <Spring $w={58} />
        <Tab><Run $size={20}>图层 （无）</Run></Tab>
      </TabStrip>
      <Crumb>
        <CrumbButton><Mixed>合成 1</Mixed></CrumbButton>
      </Crumb>
      <Stage>
        <Canvas>
          <Handle $at="0%" />
          <Handle $at="50%" />
          <Handle $at="100%" />
        </Canvas>
      </Stage>
      <ViewBar>
        <SelectBox $w={106} $h={30} $bg="#282828">
          <SelectText $size={18} $color={c.dim} aria-label="放大率" defaultValue="50%">
            <option>50%</option>
          </SelectText>
          <Chevron color={c.dim} />
        </SelectBox>
        <ViewRule />
        <SelectBox $w={135} $h={30} $bg="#282828" $pad={12}>
          <SelectText $size={20} $color={c.dim} aria-label="分辨率" defaultValue="完整">
            <option>完整</option>
          </SelectText>
          <Chevron color={c.dim} />
        </SelectBox>
        <ViewRule />
      </ViewBar>
    </Panel>
  );
}

function SidePanels() {
  return (
    <Panel as="aside">
      <PanelTitle>属性</PanelTitle>
      <PanelTitle>信息</PanelTitle>
      <PanelTitle />
      <PanelTitle>库</PanelTitle>
      <EffectsTitle>效果和预设<Bars /></EffectsTitle>
      <EffectSearch>
        <Search color="#26496c" menu />
        <PlainInput defaultValue="key" aria-label="搜索效果" />
      </EffectSearch>
      <EffectList>
        {effects.map((e) => (
          <EffectRow key={e.t} $on={e.on} $pad={effectPad[e.kind]}>
            {e.kind === "group" && <Arrow $w={13}><Chevron color="#909090" /></Arrow>}
            {e.kind === "folder" && (
              <>
                <Arrow $w={14}><Chevron color="#909090" /></Arrow>
                <EffectIcon><Folder /></EffectIcon>
              </>
            )}
            {(e.kind === "fx" || e.kind === "preset") && (
              <EffectIcon><Brick label={e.bits ?? "32"} /></EffectIcon>
            )}
            {e.on ? <NameChip $w={138} $h={22} $pad={2}>{e.t}</NameChip> : <Mixed cjk={17}>{e.t}</Mixed>}
          </EffectRow>
        ))}
      </EffectList>
      <EffectFoot>
        <svg width="18" height="18"><path d="M0 0H18V18H9V9H0Z" fill="#b4b4b4" /><path d="M0 11H7V18Z" fill="#b4b4b4" /></svg>
      </EffectFoot>
      <PanelTitle>对齐</PanelTitle>
    </Panel>
  );
}

function RenderQueue() {
  return (
    <Queue>
      <TabStrip $pad={16}>
        <Tab $active $gap={16}>
          <Cross size={9} color={c.text} w={3} />
          <Run $size={20}>渲染队列</Run>
          <Bars />
        </Tab>
        <Spring $w={53} />
        <Tab $gap={18}>
          <Swatch $color={c.sand} />
          <Mixed>合成 1</Mixed>
        </Tab>
      </TabStrip>
      <Current>
        <CurrentBox>
          <Chevron dir="right" color={c.dim} />
          <CurrentName>当前渲染</CurrentName>
          <Progress />
          <Clock $w={155}>--:--:--</Clock>
          <TimeLeft>剩余时间：</TimeLeft>
          <Clock $w={152}>--:--:--</Clock>
        </CurrentBox>
        <RenderButton $w={101} $ml={23}>
          <svg width="22" height="22" viewBox="0 0 22 22">
            <path d="M22 0V22H0V15H7V8H14V0Z" fill={g} />
            <path d="M1 2h3M6 2h3M11 2h2M1 6h3M6 6h3M1 11h3" stroke={g} strokeWidth="3" />
          </svg>
          <Run $size={24}>渲染</Run>
        </RenderButton>
        <RenderButton $w={195} $ml={22}>
          <svg width="26" height="26" viewBox="0 0 26 26">
            <rect width="24" height="23" rx="5" fill={g} />
            <text x="12" y="16" textAnchor="middle" fontFamily="Open Sans, sans-serif" fontSize="14" fontWeight="700" fill="#272727">Me</text>
            <path d="M20.500 16V26M15.500 21H25.500" stroke={g} strokeWidth="3" />
          </svg>
          <Mixed cjk={24}>AME 中的队列</Mixed>
        </RenderButton>
        <Spring $w={24} />
      </Current>
      <QueueTable>
        <colgroup>
          {[23, 68, 31, 38, 267, 149, 195].map((w, i) => (
            <col key={i} width={w} />
          ))}
          <col />
        </colgroup>
        <thead>
          <tr>
            <th />
            <th><Head $pad={9}>渲染</Head></th>
            <th>
              <Head $pad={7}>
                <svg width="19" height="20" viewBox="0 0 19 20">
                  <path d="M1 1H8L18 11 11 20 1 9Z" fill="#b4b4b4" />
                  <circle cx="5" cy="5" r="1.800" fill="#262626" />
                </svg>
              </Head>
            </th>
            <th><Head $pad={9}><Run $size={16}>#</Run></Head></th>
            <th><Head $pad={9}>合成名称</Head></th>
            <th><Head $pad={10}>状态</Head></th>
            <th><Head $pad={11}>已启动</Head></th>
            <th><Head $pad={9}>渲染时间</Head></th>
          </tr>
        </thead>
        <tbody>
          <ItemRow>
            <td><CellBox $pad={8}><Chevron /></CellBox></td>
            <td><CellBox $pad={25}><Tick defaultChecked aria-label="渲染" /></CellBox></td>
            <td><CellBox $pad={6}><Swatch $color={c.sand} /></CellBox></td>
            <ItemCell $pad={4}>1</ItemCell>
            <ItemCell $pad={7} $name>合成 1</ItemCell>
            <ItemCell $pad={4}>已加入队列</ItemCell>
            <ItemCell $pad={5}>-</ItemCell>
            <ItemCell $pad={5}>-</ItemCell>
          </ItemRow>
          <DetailRow>
            <td colSpan={8}>
              <Detail>
                <i />
                <Chevron dir="right" />
                <DetailLabel>渲染设置:</DetailLabel>
                <MiniMenu aria-label="渲染设置"><Chevron /></MiniMenu>
                <Blue as="button">最佳设置</Blue>
                <i />
                <DetailRight>日志:</DetailRight>
                <SelectBox $w={175} $h={27}>
                  <SelectText $size={18} aria-label="日志" defaultValue="仅错误">
                    <option>仅错误</option>
                  </SelectText>
                  <Chevron />
                </SelectBox>
              </Detail>
            </td>
          </DetailRow>
          <DetailRow>
            <td colSpan={8}>
              <Detail>
                <i />
                <Chevron dir="right" />
                <DetailLabel $on>输出模块:</DetailLabel>
                <MiniMenu aria-label="输出模块"><Chevron /></MiniMenu>
                <White>无损</White>
                <Plus>
                  <SquareButton aria-label="添加">
                    <svg width="16" height="16" stroke="#c8c8c8" strokeWidth="3"><path d="M8 0V16M0 8H16" /></svg>
                  </SquareButton>
                  <SquareButton aria-label="移除">
                    <svg width="16" height="16" stroke="#404040" strokeWidth="3"><path d="M0 8H16" /></svg>
                  </SquareButton>
                </Plus>
                <DetailRight>输出到:</DetailRight>
                <Pair>
                  <MiniMenu aria-label="输出到"><Chevron /></MiniMenu>
                  <Blue as="button">合成 1_1.avi</Blue>
                </Pair>
              </Detail>
            </td>
          </DetailRow>
        </tbody>
      </QueueTable>
    </Queue>
  );
}

function OutputModule() {
  return (
    <Dialog $w={896} $top={239} $dx={447} aria-label="输出模块设置">
      <DialogHead><Run $size={18}>输出模块设置</Run><Cross /></DialogHead>
      <Frame>
        <FrameTab>主要选项</FrameTab>
        <Group $h={109}>
          <GroupBody $pt={52} $pl={46}><DimLine>渲染后动作:</DimLine></GroupBody>
        </Group>
        <Group $h={549} $mt={12}>
          <Legend $ml={7}>
            <DimCheck><Tick $size={21} $dim defaultChecked />视频输出</DimCheck>
          </Legend>
          <GroupBody $pt={163} $pl={22} $pr={22}>
            <Group $h={195}>
              <Legend $ml={7}><DimCheck><Tick $size={21} $dim />调整大小</DimCheck></Legend>
              <GroupBody $pt={74} $pl={23}>
                <DimLine>调整大小:</DimLine>
                <DimLine>调整后:</DimLine>
              </GroupBody>
            </Group>
            <Group $h={130} $mt={12}>
              <Legend $ml={7}><DimCheck><Tick $size={21} $dim />裁剪</DimCheck></Legend>
              <GroupBody $pt={45} $pl={23}><DimLine>顶部:</DimLine></GroupBody>
            </Group>
          </GroupBody>
        </Group>
        <Group $h={136} $mt={7}>
          <Legend $ml={7} $h={38}><DimButton>自动音频输出</DimButton></Legend>
          <GroupBody $pt={5} $pl={22}>
            <DimLine>只有在合成包含音频时才会输出音频。</DimLine>
            <DimButton>48.000 kHz</DimButton>
          </GroupBody>
        </Group>
      </Frame>
      <FrameFoot>
        <DimPill>确定</DimPill>
        <DimPill>取消</DimPill>
      </FrameFoot>
    </Dialog>
  );
}

function QuickTimeOptions() {
  return (
    <Dialog $w={709} $top={117} $dx={353} aria-label="QuickTime 选项">
      <DialogHead><Mixed cjk={18}>QuickTime 选项</Mixed><Cross /></DialogHead>
      <Summary>
        <Group $h={182}>
          <Legend><Chevron color={c.mid} />导出设置</Legend>
          <GroupBody $pt={18} $pl={44} $pr={34}>
            <SubHead><Chevron color={c.mid} />摘要</SubHead>
            <OutputLine>
              <b>输出:</b>
              <div>
                <div><Mixed>1920x1080 (1.0), 60 fps, 逐行, 100 (63% HLG, 51% PQ), ...</Mixed></div>
                <div><Mixed>未压缩, 48000 Hz, 立体声, 16 位</Mixed></div>
              </div>
            </OutputLine>
          </GroupBody>
        </Group>
      </Summary>
      <DialogTabs>
        <DialogTab $on>视频</DialogTab>
        <DialogTab>音频</DialogTab>
      </DialogTabs>
      <ScrollArea>
        <ScrollContent>
          <Group $h={116}>
            <Legend><Chevron color={c.mid} />视频编解码器</Legend>
            <GroupBody $pt={21} $pl={0}>
              <Field>
                <label htmlFor="codec">视频编解码器:</label>
                <CodecWrap>
                  <SelectBox $w={390} $h={30} $bg="#212121" $pad={10}>
                    <SelectText id="codec" $size={16} $color="#cacaca" defaultValue="Apple ProRes 4444">
                      {codecs.map((name) => <option key={name}>{name}</option>)}
                    </SelectText>
                    <Chevron color={c.mid} />
                  </SelectBox>
                  <CodecMenu role="listbox" aria-label="视频编解码器">
                    {codecs.map((name) => {
                      const on = name === "Apple ProRes 4444";
                      return (
                        <CodecItem key={name} $on={on} role="option" aria-selected={on}>
                          {on ? (
                            <svg width="18" height="16" fill="none" stroke="#d0d0d0" strokeWidth="3">
                              <path d="M2 9 7 14 15 2" />
                            </svg>
                          ) : <i />}
                          <Mixed>{name}</Mixed>
                        </CodecItem>
                      );
                    })}
                  </CodecMenu>
                </CodecWrap>
              </Field>
            </GroupBody>
          </Group>
          <Group $h={112} $mt={11}>
            <Legend><Chevron color={c.mid} />基本视频设置</Legend>
            <GroupBody $pt={20} $pl={0}><Field><label>品质:</label></Field></GroupBody>
          </Group>
          <Group $h={114} $mt={11}>
            <Legend><Chevron color={c.mid} />比特率设置</Legend>
            <GroupBody $pt={20} $pl={13}>
              <CheckRow><Tick $size={21} $dim /><Mixed>将数据速率限制为 1,0</Mixed></CheckRow>
            </GroupBody>
          </Group>
          <Group $h={159} $mt={10}>
            <Legend><Chevron color={c.mid} />高级设置</Legend>
            <GroupBody $pt={21} $pl={13}>
              <CheckRow><Tick $size={21} $dim /><Mixed>关键帧间隔（帧数） :</Mixed></CheckRow>
              <CheckRow><Tick $size={21} $dim /><Mixed>帧重新排序</Mixed></CheckRow>
            </GroupBody>
          </Group>
        </ScrollContent>
        <ScrollTrack />
      </ScrollArea>
      <DialogFoot>
        <Pill $main>确定</Pill>
        <Pill>取消</Pill>
      </DialogFoot>
      <Marker $x={89} $y={363} $w={601} $h={71} />
      <Marker $x={252} $y={546} $w={423} $h={67} />
    </Dialog>
  );
}

export default function App() {
  return (
    <Shell>
      <Global />
      <TopBars />
      <Upper>
        <EffectControls />
        <Composition />
        <SidePanels />
      </Upper>
      <RenderQueue />
      <StatusBar>
        <Mixed cjk={24}>消息:</Mixed>
        <Mixed cjk={24}>RAM:</Mixed>
        <Mixed cjk={24}>渲染已开始:</Mixed>
        <Mixed cjk={24}>已用总时间:</Mixed>
        <NotifyCheck><Tick $size={21} $dim /><Run $size={24}>队列完成时通知</Run></NotifyCheck>
        <svg width="24" height="24" viewBox="0 0 24 24">
          <path d="M9 0h2v2c4 2 4 6 4 9l-5 6 1 3H0C4 16 2 4 8 2Z" fill={c.dim} />
          <circle cx="17" cy="17" r="4.500" fill="none" stroke={c.dim} strokeWidth="3" strokeDasharray="2.500 1" />
        </svg>
      </StatusBar>
      <OutputModule />
      <QuickTimeOptions />
      <Uploader>
        <UploaderMark>
          <svg width="32" height="28" viewBox="0 0 32 28" fill="none" stroke="#fff" strokeWidth="4.500">
            <circle cx="16" cy="8" r="5.700" />
            <circle cx="8" cy="19" r="5.700" />
            <path d="M19.500 15.500a5.700 5.700 0 1 1 0 7.500L13 15" />
          </svg>
        </UploaderMark>
        拖拽至此上传
      </Uploader>
    </Shell>
  );
}
